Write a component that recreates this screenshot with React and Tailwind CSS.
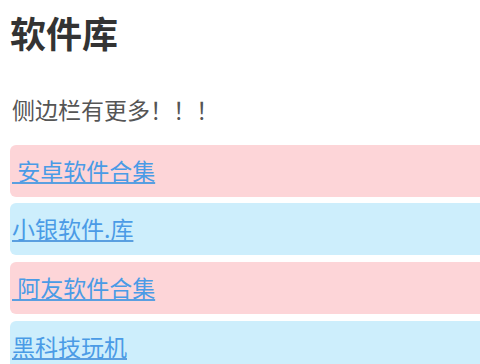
const LINKS = [
  { label: ' 安卓软件合集', tone: 'pink' },
  { label: '小银软件.库', tone: 'blue' },
  { label: ' 阿友软件合集', tone: 'pink' },
  { label: '黑科技玩机', tone: 'blue' },
];

export default function App() {
  return (
    <div
      className="h-[364px] w-[480px] overflow-hidden bg-white pl-[10px]"
      style={{ fontFamily: '"Noto Sans CJK SC", "Noto Sans", sans-serif' }}
    >
      <h1 className="pt-[6px] text-[36px] font-bold leading-[52px] text-[#333333]">软件库</h1>
      <p className="mt-[35px] pl-[2px] text-[23px] leading-[32px] text-[#555555]">侧边栏有更多！！！</p>
      <div className="mt-[19.5px] flex flex-col gap-[6.7px]">
        {LINKS.map(({ label, tone }) => (
          <div
            key={label}
            className={`flex h-[52px] items-center rounded-l-[6px] pb-[2px] pl-[2px] ${
              tone === 'pink' ? 'bg-[#fdd5d8]' : 'bg-[#cdeefc]'
            }`}
          >
            <a
              href="#"
              className="whitespace-pre text-[23px] leading-[30px] text-[#4a9be6] underline decoration-[#5a9fe0] decoration-[1.5px] underline-offset-[2px]"
            >
              {label}
            </a>
          </div>
        ))}
      </div>
    </div>
  );
}
